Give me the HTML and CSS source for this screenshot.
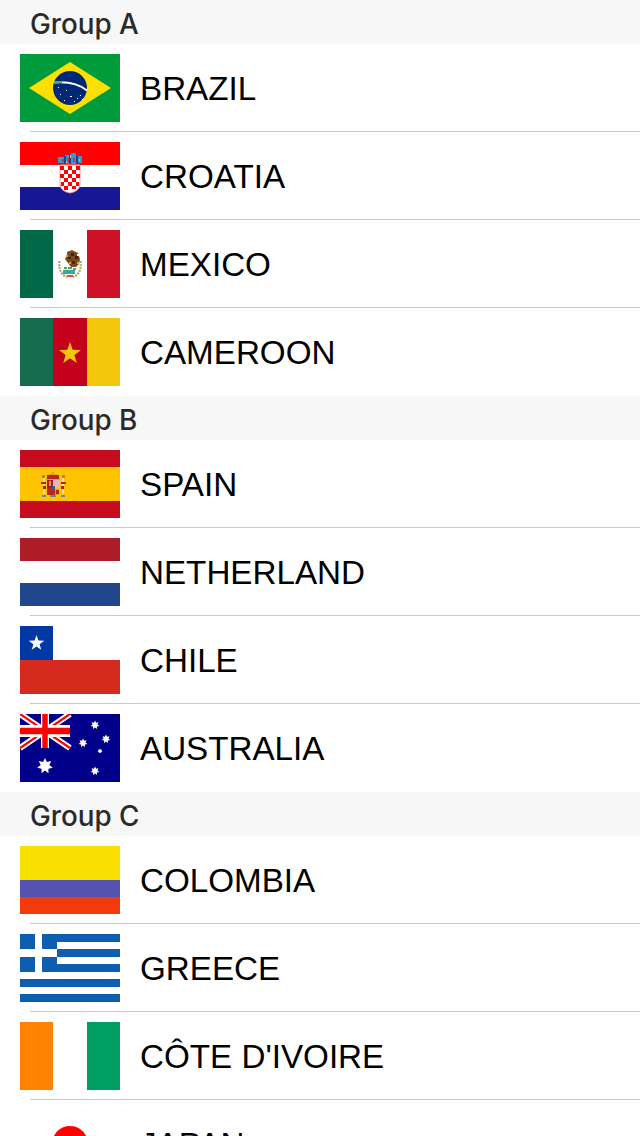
FILE: index.html
```html
<!DOCTYPE html>
<html lang="en">
<head>
<meta charset="utf-8">
<title>Groups</title>
<link rel="stylesheet" href="styles.css">
</head>
<body>
<main class="list">
  <h2 class="group">Group A</h2>
  <div class="row">
    <svg class="flag" viewBox="0 0 100 68" shape-rendering="crispEdges"><rect width="100" height="68" fill="#009b3a"/><polygon points="9,34 50,8 91,34 50,60" fill="#fedf00" shape-rendering="auto"/><circle cx="50" cy="34" r="17" fill="#002776" shape-rendering="auto"/><path d="M34 28.500C45 27.500 58 29 67 36.500" fill="none" stroke="#fff" stroke-width="2" shape-rendering="auto"/><path d="M34 28.500L42 28" fill="none" stroke="#2fae6a" stroke-width="2" shape-rendering="auto"/><g fill="#fff"><rect x="40" y="40" width="1" height="1"/><rect x="46" y="36" width="1" height="1"/><rect x="50" y="42" width="2" height="1"/><rect x="57" y="44" width="1" height="1"/><rect x="60" y="41" width="1" height="1"/><rect x="44" y="46" width="1" height="1"/><rect x="54" y="47" width="1" height="1"/><rect x="62" y="45" width="1" height="1"/><rect x="38" y="33" width="1" height="1"/></g></svg>
    <span class="name">BRAZIL</span>
  </div>
  <div class="sep"></div>
  <div class="row">
    <svg class="flag" viewBox="0 0 100 68" shape-rendering="crispEdges"><rect width="100" height="23" fill="#ff0000"/><rect y="23" width="100" height="22" fill="#fff"/><rect y="45" width="100" height="23" fill="#171796"/><path d="M40 23H60V42Q60 49 50 51Q40 49 40 42Z" fill="#fff" stroke="#f6a0a0" stroke-width="1" shape-rendering="auto"/><path fill="#f00" d="M40 24h4v4h-4zM48 24h4v4h-4zM56 24h4v4h-4zM44 28h4v4h-4zM52 28h4v4h-4zM40 32h4v4h-4zM48 32h4v4h-4zM56 32h4v4h-4zM44 36h4v4h-4zM52 36h4v4h-4zM41 40h3v4h-3zM48 40h4v4h-4zM56 40h3v4h-3zM44 44h4v4h-4zM52 44h4v3h-4z"/><path fill="#2f9bd6" d="M38 15h6v6h-6zM45 13h4v9h-4zM51 11h5v11h-5zM57 14h5v7h-5z"/><path fill="#1b3f94" d="M44 14h2v8h-2zM49 12h2v10h-2zM56 14h2v8h-2z"/><path fill="#e03030" d="M47 16h2v4h-2zM53 16h2v4h-2zM42 17h2v3h-2z"/><path fill="#f3c12c" d="M50 13h1v3h-1zM46 19h1v2h-1zM59 17h1v2h-1z"/></svg>
    <span class="name">CROATIA</span>
  </div>
  <div class="sep"></div>
  <div class="row">
    <svg class="flag" viewBox="0 0 100 68" shape-rendering="crispEdges"><rect width="33" height="68" fill="#006847"/><rect x="33" width="34" height="68" fill="#fff"/><rect x="67" width="33" height="68" fill="#ce1126"/><path d="M47 22l5-2 6 3 2 6-1 5-3 3-5 0-3-4-3-4 2-4z" fill="#7a4a1e" shape-rendering="auto"/><path fill="#3b2410" d="M51 23h3v3h-3zM55 26h3v3h-3zM48 27h3v2h-3zM52 31h3v3h-3z"/><path fill="#d9a441" d="M46 25h2v2h-2zM57 32h2v2h-2zM49 32h2v2h-2z"/><path fill="#fff" d="M57 24h2v2h-2z"/><path d="M39.500 31Q38 44 47 47M60.500 31Q62 44 53 47" fill="none" stroke="#a6a85e" stroke-width="2.200" stroke-dasharray="2 1" shape-rendering="auto"/><path fill="#35a8a0" d="M43 40h12v4H43z"/><path fill="#d4553a" d="M47 45h6v2h-6z"/><path fill="#6b9a4a" d="M44 37h3v2h-3zM53 38h3v2h-3zM48 37h4v2h-4z"/></svg>
    <span class="name">MEXICO</span>
  </div>
  <div class="sep"></div>
  <div class="row row-last">
    <svg class="flag" viewBox="0 0 100 68"><rect width="33" height="68" fill="#146b4e"/><rect x="33" width="34" height="68" fill="#c4001c"/><rect x="67" width="33" height="68" fill="#f5c70c"/><polygon points="50,24 52.700,31.800 61,32 54.400,37 56.800,45 50,40.200 43.200,45 45.600,37 39,32 47.300,31.800" fill="#f5c70c"/></svg>
    <span class="name">CAMEROON</span>
  </div>

  <h2 class="group">Group B</h2>
  <div class="row">
    <svg class="flag" viewBox="0 0 100 68" shape-rendering="crispEdges"><rect width="100" height="68" fill="#c60b1e"/><rect y="17" width="100" height="34" fill="#ffc400"/><path fill="#b5281c" d="M27 25h12v4H27z"/><path fill="#d8a325" d="M32 22h2v3h-2zM29 24h8v1h-8zM26 29h14v1H26z"/><path fill="#a81c1c" d="M27 30h6v8h-6z"/><path fill="#e8b4bc" d="M33 30h7v8h-7z"/><path fill="#d8a325" d="M29 31h2v5h-2zM35 39h4v6h-4z"/><path fill="#b5281c" d="M27 38h8v7h-8zM36 40h3v4h-3z"/><path fill="#2a5fa8" d="M32 36h3v4h-3z"/><path fill="#e6dcc8" d="M23 28h2v16h-2zM42 28h2v16h-2z"/><path fill="#b08a2a" d="M22 25h3v3h-3zM42 25h3v3h-3z"/><path fill="#c01818" d="M21 32h5v2h-5zM41 32h5v2h-5zM23 36h3v3h-3zM41 36h3v3h-3z"/><path fill="#6c8a9c" d="M22 45h4v2h-4zM41 45h4v2h-4zM30 45h6v2h-6z"/></svg>
    <span class="name">SPAIN</span>
  </div>
  <div class="sep"></div>
  <div class="row">
    <svg class="flag" viewBox="0 0 100 68" shape-rendering="crispEdges"><rect width="100" height="23" fill="#ae1c28"/><rect y="23" width="100" height="22" fill="#fff"/><rect y="45" width="100" height="23" fill="#21468b"/></svg>
    <span class="name">NETHERLAND</span>
  </div>
  <div class="sep"></div>
  <div class="row">
    <svg class="flag" viewBox="0 0 100 68"><rect width="100" height="34" fill="#fff"/><rect y="34" width="100" height="34" fill="#d52b1e"/><rect width="33" height="34" fill="#0039a6"/><polygon points="16.500,9 18.400,14.600 24.300,14.700 19.600,18.200 21.300,23.800 16.500,20.500 11.700,23.800 13.400,18.200 8.700,14.700 14.600,14.600" fill="#fff"/></svg>
    <span class="name">CHILE</span>
  </div>
  <div class="sep"></div>
  <div class="row row-last">
    <svg class="flag" viewBox="0 0 100 68"><defs><polygon id="au-star" points="0,-10 2.400,-5 7.800,-6.200 5.400,-1.200 9.700,2.200 4.300,3.400 4.300,9 0,5.500 -4.300,9 -4.300,3.400 -9.700,2.200 -5.400,-1.200 -7.800,-6.200 -2.400,-5" fill="#fff"/></defs><rect width="100" height="68" fill="#00008b"/><path d="M0 0L50 34M50 0L0 34" stroke="#fff" stroke-width="6"/><path d="M0 0L50 34M50 0L0 34" stroke="#f00" stroke-width="2.200"/><path d="M25 0V34" stroke="#fff" stroke-width="8"/><path d="M0 17H50" stroke="#fff" stroke-width="12"/><path d="M25 0V34" stroke="#f00" stroke-width="5.500"/><path d="M0 17H50" stroke="#f00" stroke-width="6.500"/><use href="#au-star" transform="translate(25 52) scale(.8)"/><use href="#au-star" transform="translate(75 11) scale(.45)"/><use href="#au-star" transform="translate(86 25) scale(.45)"/><use href="#au-star" transform="translate(63 29) scale(.45)"/><use href="#au-star" transform="translate(80 37) scale(.26)"/><use href="#au-star" transform="translate(75 57) scale(.45)"/></svg>
    <span class="name">AUSTRALIA</span>
  </div>

  <h2 class="group">Group C</h2>
  <div class="row">
    <svg class="flag" viewBox="0 0 100 68" shape-rendering="crispEdges"><rect width="100" height="34" fill="#f9e000"/><rect y="34" width="100" height="17" fill="#5452ac"/><rect y="51" width="100" height="17" fill="#f23a0a"/></svg>
    <span class="name">COLOMBIA</span>
  </div>
  <div class="sep"></div>
  <div class="row">
    <svg class="flag" viewBox="0 0 100 68" shape-rendering="crispEdges"><rect width="100" height="68" fill="#fff"/><path fill="#0d5eaf" d="M0 0h100v8H0zM37 15h63v8H37zM37 30h63v8H37zM0 45h100v8H0zM0 60h100v8H0z"/><path fill="#0d5eaf" d="M0 0h37v38H0z"/><path fill="#fff" d="M15 0h7v38h-7zM0 15h37v8H0z"/></svg>
    <span class="name">GREECE</span>
  </div>
  <div class="sep"></div>
  <div class="row">
    <svg class="flag" viewBox="0 0 100 68" shape-rendering="crispEdges"><rect width="33" height="68" fill="#ff8200"/><rect x="33" width="34" height="68" fill="#fff"/><rect x="67" width="33" height="68" fill="#009e60"/></svg>
    <span class="name">CÔTE D'IVOIRE</span>
  </div>
  <div class="sep"></div>
  <div class="row">
    <svg class="flag" viewBox="0 0 100 68"><rect width="100" height="68" fill="#fff"/><circle cx="50" cy="34" r="18" fill="#f00"/></svg>
    <span class="name">JAPAN</span>
  </div>
</main>
</body>
</html>
```
FILE: styles.css
```css
html, body {
  margin: 0;
  padding: 0;
  height: 1136px;
  overflow: hidden;
  background: #fff;
}

.list {
  display: flex;
  flex-direction: column;
  font-family: "Liberation Sans", Arial, sans-serif;
}

.group {
  height: 40px;
  margin: 0;
  padding: 4px 0 0 30px;
  background: #f7f7f7;
  color: #2a2a2a;
  font-family: Inter, "Liberation Sans", sans-serif;
  font-size: 27.800px;
  font-weight: 500;
  line-height: 40px;
  flex: none;
}

.row {
  display: flex;
  align-items: center;
  gap: 20px;
  height: 68px;
  padding: 10px 0 9px 20px;
  flex: none;
}

.row-last {
  padding-bottom: 10px;
}

.flag {
  display: block;
  width: 100px;
  height: 68px;
  flex: none;
}

.name {
  padding-top: 1px;
  color: #000;
  font-size: 33.200px;
  line-height: 40px;
}

.sep {
  height: 1px;
  margin-left: 30px;
  background: #c8c7cc;
  flex: none;
}
```
